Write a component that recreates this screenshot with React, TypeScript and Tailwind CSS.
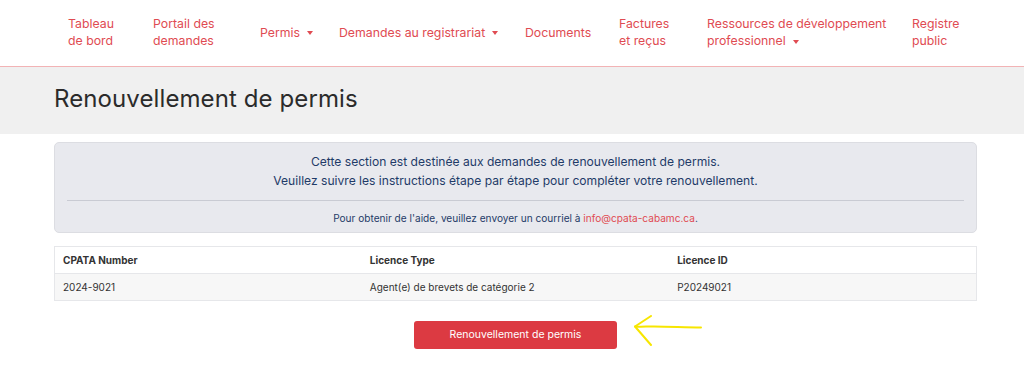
import { useState } from "react";

const navItems = [
  { lines: ["Tableau", "de bord"], w: "w-[85px]" },
  { lines: ["Portail des", "demandes"], w: "w-[107px]" },
  { lines: ["Permis"], w: "w-[79px]", caret: true },
  { lines: ["Demandes au registrariat"], w: "w-[186px]", caret: true },
  { lines: ["Documents"], w: "w-[94px]" },
  { lines: ["Factures", "et reçus"], w: "w-[88px]" },
  { lines: ["Ressources de développement", "professionnel"], w: "w-[205px]", caret: true },
  { lines: ["Registre", "public"], w: "w-[80px]" },
];

const Caret = () => (
  <span className="ml-[7px] inline-block align-middle border-x-[3.5px] border-t-[4px] border-x-transparent border-t-[#e04b52]" />
);

const NavBar = () => (
  <nav className="h-[67px] bg-white border-b-[1.5px] border-[#f2b3b5]">
    <ul className="flex h-full items-center pl-[68px] pb-[2px] text-[12.3px] leading-[17px] text-[#e04b52]">
      {navItems.map((item) => (
        <li key={item.lines[0]} className={`${item.w} shrink-0`}>
          {item.lines.map((line, i) => (
            <div key={line} className="whitespace-nowrap">
              {line}
              {item.caret && i === item.lines.length - 1 && <Caret />}
            </div>
          ))}
        </li>
      ))}
    </ul>
  </nav>
);

const Arrow = () => (
  <svg width="72" height="34" viewBox="0 0 72 34" fill="none" className="absolute left-full top-[-5px] ml-[15px]">
    <path d="M69 12.5 C55 12 40 12 22 11.5 C14 11.5 8 12 3 11.5" stroke="#f7e600" strokeWidth="2" strokeLinecap="round" />
    <path d="M19 1 L3 11.5 L19 30" stroke="#f7e600" strokeWidth="2" strokeLinecap="round" strokeLinejoin="round" />
  </svg>
);

export default function App() {
  const [rows] = useState([
    { number: "2024-9021", type: "Agent(e) de brevets de catégorie 2", id: "P20249021" },
  ]);

  return (
    <div className="min-h-[377px] bg-white font-['Inter',sans-serif] text-[#333]">
      <NavBar />
      <header className="h-[67px] bg-[#f0f0f0] flex items-center pl-[54px] pr-[47px] pb-[3px]">
        <h1 className="text-[24px] text-[#2b2b2b] tracking-[0.1px]">Renouvellement de permis</h1>
      </header>

      <main className="pl-[54px] pr-[47px] pt-[8px]">
        <section className="rounded-[5px] border border-[#dcdde2] bg-[#e8e9ee] px-[12px] pt-[9px] pb-[6px] text-center">
          <p className="text-[12.1px] leading-[19px] text-[#1f3b68]">
            Cette section est destinée aux demandes de renouvellement de permis.
            <br />
            Veuillez suivre les instructions étape par étape pour compléter votre renouvellement.
          </p>
          <hr className="mt-[10px] mb-[9px] border-t border-[#c9cbd3]" />
          <p className="text-[10.1px] leading-[16px] text-[#1f3b68]">
            Pour obtenir de l'aide, veuillez envoyer un courriel à{" "}
            <a className="text-[#e04b52]">info@cpata-cabamc.ca</a>.
          </p>
        </section>

        <table className="mt-[13px] w-full table-fixed border border-[#e6e7ea] text-[10px] text-[#333]">
          <thead>
            <tr className="h-[27px] bg-white border-b border-[#e6e7ea]">
              <th className="px-[8px] text-left font-bold">CPATA Number</th>
              <th className="px-[8px] text-left font-bold">Licence Type</th>
              <th className="px-[8px] text-left font-bold">Licence ID</th>
            </tr>
          </thead>
          <tbody>
            {rows.map((r) => (
              <tr key={r.id} className="h-[27px] bg-[#f7f7f7]">
                <td className="px-[8px]">{r.number}</td>
                <td className="px-[8px]">{r.type}</td>
                <td className="px-[8px]">{r.id}</td>
              </tr>
            ))}
          </tbody>
        </table>

        <div className="mt-[19px] flex justify-center">
          <div className="relative">
            <button className="h-[28px] w-[203px] rounded-[3px] bg-[#dc3a42] text-[10.5px] text-white">
              Renouvellement de permis
            </button>
            <Arrow />
          </div>
        </div>
      </main>
    </div>
  );
}
